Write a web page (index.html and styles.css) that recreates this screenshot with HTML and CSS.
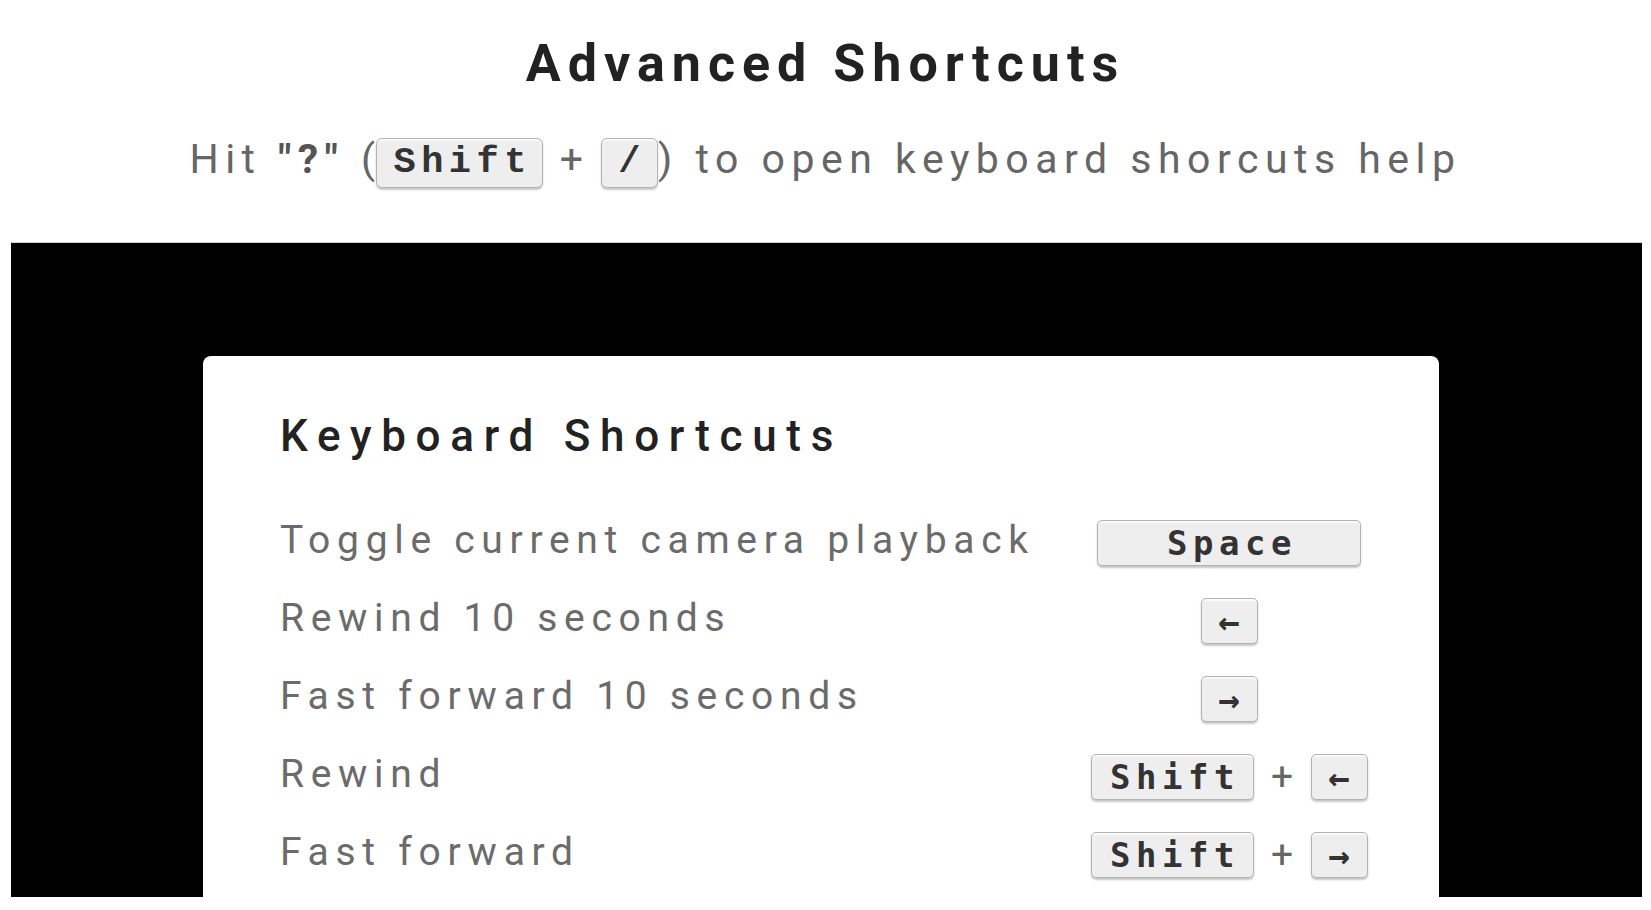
FILE: index.html
```html
<!DOCTYPE html>
<html lang="en">
<head>
<meta charset="utf-8">
<title>Advanced Shortcuts</title>
<link rel="stylesheet" href="styles.css">
</head>
<body>
<header class="intro">
  <h1 class="headline">Advanced Shortcuts</h1>
  <p class="hint">Hit <b class="hint-strong">"?"</b> (<kbd class="doc-key">Shift</kbd> + <kbd class="doc-key doc-key--single">/</kbd>) to open keyboard shorcuts help</p>
</header>
<section class="stage">
  <div class="dialog">
    <h2 class="dialog-title">Keyboard Shortcuts</h2>
    <div class="shortcut-list">
      <div class="shortcut">
        <span class="shortcut-label">Toggle current camera playback</span>
        <span class="shortcut-keys"><kbd class="key key--space">Space</kbd></span>
      </div>
      <div class="shortcut">
        <span class="shortcut-label">Rewind 10 seconds</span>
        <span class="shortcut-keys"><kbd class="key key--arrow">&#8592;</kbd></span>
      </div>
      <div class="shortcut">
        <span class="shortcut-label">Fast forward 10 seconds</span>
        <span class="shortcut-keys"><kbd class="key key--arrow">&#8594;</kbd></span>
      </div>
      <div class="shortcut">
        <span class="shortcut-label">Rewind</span>
        <span class="shortcut-keys"><kbd class="key key--shift">Shift</kbd><span class="plus">+</span><kbd class="key key--arrow">&#8592;</kbd></span>
      </div>
      <div class="shortcut">
        <span class="shortcut-label">Fast forward</span>
        <span class="shortcut-keys"><kbd class="key key--shift">Shift</kbd><span class="plus">+</span><kbd class="key key--arrow">&#8594;</kbd></span>
      </div>
    </div>
  </div>
</section>
</body>
</html>
```

FILE: styles.css
```css
html, body {
  margin: 0;
  padding: 0;
  background: #ffffff;
}

body {
  font-family: Roboto, "Liberation Sans", Arial, sans-serif;
  height: 910px;
  overflow: hidden;
}

.intro {
  padding-top: 34px;
  text-align: center;
}

.headline {
  margin: 0;
  font-size: 52px;
  line-height: 60px;
  font-weight: 700;
  letter-spacing: 7px;
  color: #222222;
}

.hint {
  margin: 37px 0 0;
  font-size: 41px;
  line-height: 56px;
  height: 56px;
  font-weight: 400;
  letter-spacing: 6.5px;
  color: #666666;
}

.hint-strong {
  font-weight: 700;
  color: #555555;
}

.doc-key {
  display: inline-block;
  box-sizing: border-box;
  height: 50px;
  padding: 0 10px 0 16px;
  margin-left: -5px;
  vertical-align: 1px;
  font-family: "Liberation Mono", "Courier New", monospace;
  font-weight: 700;
  font-size: 37px;
  line-height: 47px;
  letter-spacing: 5.5px;
  color: #333333;
  background: #eeeeee;
  border: 1px solid #b4b4b4;
  border-radius: 6px;
  box-shadow: 0 2px 2px rgba(0, 0, 0, 0.22), inset 0 2px 0 rgba(255, 255, 255, 0.7);
}

.doc-key--single {
  width: 57px;
  padding: 0 0 0 5px;
  text-align: center;
}

.stage {
  box-sizing: border-box;
  height: 655px;
  margin: 55px 9px 0 11px;
  padding: 113px 0 0 192px;
  background: #000000;
  border-top: 1px solid #d0d0d0;
  overflow: hidden;
}

.dialog {
  box-sizing: border-box;
  width: 1236px;
  height: 600px;
  padding: 54px 65px 0 77px;
  background: #ffffff;
  border-radius: 8px 8px 0 0;
}

.dialog-title {
  margin: 0 0 39px;
  font-size: 44px;
  line-height: 52px;
  font-weight: 500;
  letter-spacing: 9.7px;
  color: #222222;
}

.shortcut-list {
  display: flex;
  flex-direction: column;
}

.shortcut {
  display: grid;
  grid-template-columns: 1fr 290px;
  align-items: center;
  height: 78px;
}

.shortcut-label {
  font-size: 39px;
  line-height: 78px;
  letter-spacing: 6.7px;
  color: #6b6b6b;
  white-space: nowrap;
}

.shortcut-keys {
  display: flex;
  justify-content: center;
  align-items: center;
  margin-top: 6px;
}

.key {
  display: inline-flex;
  box-sizing: border-box;
  height: 46px;
  align-items: center;
  justify-content: center;
  font-family: "DejaVu Sans Mono", "Liberation Mono", monospace;
  font-weight: 700;
  font-size: 34px;
  letter-spacing: 5.5px;
  color: #333333;
  background: #eeeeee;
  border: 1px solid #b4b4b4;
  border-radius: 5px;
  box-shadow: 0 2px 2px rgba(0, 0, 0, 0.22), inset 0 2px 0 rgba(255, 255, 255, 0.7);
}

.key--space {
  width: 264px;
  padding-left: 6px;
}

.key--shift {
  width: 163px;
  padding-left: 6px;
}

.key--arrow {
  width: 57px;
  font-size: 36px;
  letter-spacing: 0;
}

.plus {
  width: 57px;
  text-align: center;
  font-family: Roboto, "Liberation Sans", sans-serif;
  font-size: 39px;
  color: #666666;
}
```
